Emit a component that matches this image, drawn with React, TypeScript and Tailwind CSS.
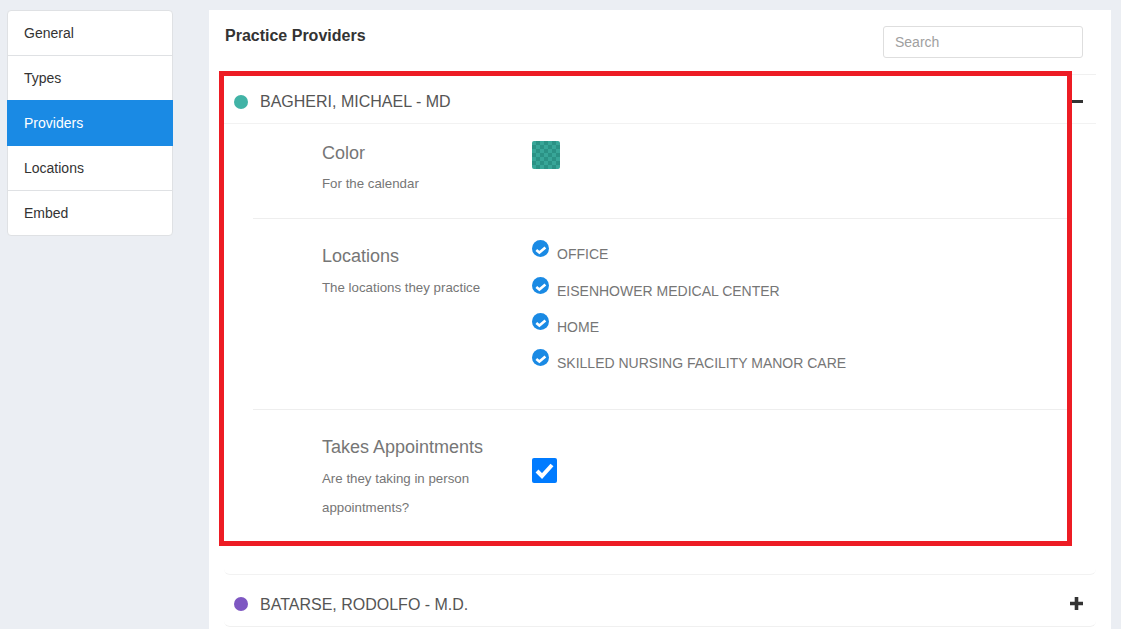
import React from "react";

const menu = ["General", "Types", "Providers", "Locations", "Embed"];
const locations = [
  "OFFICE",
  "EISENHOWER MEDICAL CENTER",
  "HOME",
  "SKILLED NURSING FACILITY MANOR CARE",
];

function CheckCircle() {
  return (
    <svg width="17" height="17" viewBox="0 0 17 17" className="shrink-0">
      <circle cx="8.5" cy="8.5" r="8.5" fill="#1a8ae4" />
      <path d="M4.3 10l3.1 2.6 6-5" fill="none" stroke="#fff" strokeWidth="2.6" />
    </svg>
  );
}

function App() {
  return (
    <div className="relative h-[629px] w-[1121px] overflow-hidden bg-[#ebeef3] font-['Liberation_Sans',Arial,sans-serif] text-[#333]">
      <div className="flex items-start pl-[7px] pt-[10px]">
        {/* left menu */}
        <div className="w-[166px] rounded-[4px] border border-[#dfe1e4] bg-white text-sm">
          {menu.map((m, i) => {
            const active = m === "Providers";
            const line = i === 0 || i === 3;
            return (
              <div
                key={m}
                className={
                  active
                    ? "-mx-px flex h-[46px] items-center bg-[#1a8ae4] pl-[17px] text-white"
                    : line
                    ? "flex h-[45px] items-center border-b border-[#dfe1e4] pl-4"
                    : "flex h-[44px] items-center pl-4"
                }
              >
                {m}
              </div>
            );
          })}
        </div>

        {/* main panel */}
        <div className="ml-9 h-[619px] w-[902px] bg-white px-[15px]">
          <div className="flex h-[64px] items-start justify-between pr-[13px]">
            <div className="pl-px pt-[17px] text-base font-bold leading-[18px]">Practice Providers</div>
            <input
              placeholder="Search"
              className="mt-4 h-8 w-[200px] rounded-[3px] border border-[#dedede] px-[11px] text-sm text-[#555] outline-none placeholder:text-[#a0a0a0]"
            />
          </div>

          <div className="h-[501px] rounded-b-[6px] border-y border-[#f0f0f0] border-b-[#f2f2f2]">
            <div className="flex h-[49px] items-center border-b border-[#f2f2f2] pl-[10px] pr-[13px] pt-[5px]">
              <span className="h-[14px] w-[14px] rounded-full bg-[#41b3a6]" />
              <span className="ml-3 flex-1 text-base text-[#555]">BAGHERI, MICHAEL - MD</span>
              <span className="h-[3px] w-[11px] bg-[#333]" />
            </div>

            <div className="mx-[29px]">
              <div className="flex h-[95px] border-b border-[#eee] pl-[69px]">
                <div className="w-[210px] pt-[17px]">
                  <div className="text-lg leading-[24px] text-[#767676]">Color</div>
                  <div className="mt-[12px] text-[13.3px] leading-[14px] text-[#767676]">For the calendar</div>
                </div>
                <div className="pt-[17px]">
                  <div className="h-7 w-7 rounded-[2px] bg-[#2a9d8f] bg-[repeating-conic-gradient(#2b9285_0_25%,#38a698_0_50%)] bg-[length:8px_8px]" />
                </div>
              </div>

              <div className="flex h-[191px] border-b border-[#eee] pl-[69px]">
                <div className="w-[210px] pt-[25px]">
                  <div className="text-lg leading-[24px] text-[#767676]">Locations</div>
                  <div className="mt-[13px] text-[13.3px] leading-[14px] text-[#767676]">The locations they practice</div>
                </div>
                <div className="flex flex-col pt-[21px]">
                  {locations.map((l, i) => (
                    <div
                      key={l}
                      className={
                        i === 0
                          ? "flex h-[37px] items-start gap-2 text-sm text-[#767676]"
                          : "flex h-[36px] items-start gap-2 text-sm text-[#767676]"
                      }
                    >
                      <CheckCircle />
                      <span className="pt-[6px] leading-4">{l}</span>
                    </div>
                  ))}
                </div>
              </div>

              <div className="flex pl-[69px]">
                <div className="w-[210px] pt-[25px]">
                  <div className="text-lg leading-[24px] text-[#767676]">Takes Appointments</div>
                  <div className="mt-[5px] text-[13.3px] leading-[29px] text-[#767676]">
                    Are they taking in person
                    <br />
                    appointments?
                  </div>
                </div>
                <div className="pt-[48px]">
                  <div className="flex h-[25px] w-[25px] items-center justify-center rounded-[2px] bg-[#007bff]">
                    <svg width="19" height="17" viewBox="0 0 19 17">
                      <path d="M2 9l5 5L17 3" fill="none" stroke="#fff" strokeWidth="4" />
                    </svg>
                  </div>
                </div>
              </div>
            </div>
          </div>

          <div className="flex h-[52px] items-center rounded-b-[6px] border-b border-[#f0f0f0] pl-[10px] pr-[13px] pt-[6px]">
            <span className="h-[14px] w-[14px] rounded-full bg-[#7e57c2]" />
            <span className="ml-3 flex-1 pt-[2px] text-base text-[#555]">BATARSE, RODOLFO - M.D.</span>
            <svg width="13" height="13" viewBox="0 0 13 13">
              <path d="M6.5 0v13M0 6.5h13" stroke="#333" strokeWidth="3.6" />
            </svg>
          </div>
        </div>
      </div>

      {/* red annotation box */}
      <div className="absolute left-[219px] top-[71px] h-[475px] w-[853px] border-[5px] border-[#ed1c24]" />
    </div>
  );
}

export default App;
